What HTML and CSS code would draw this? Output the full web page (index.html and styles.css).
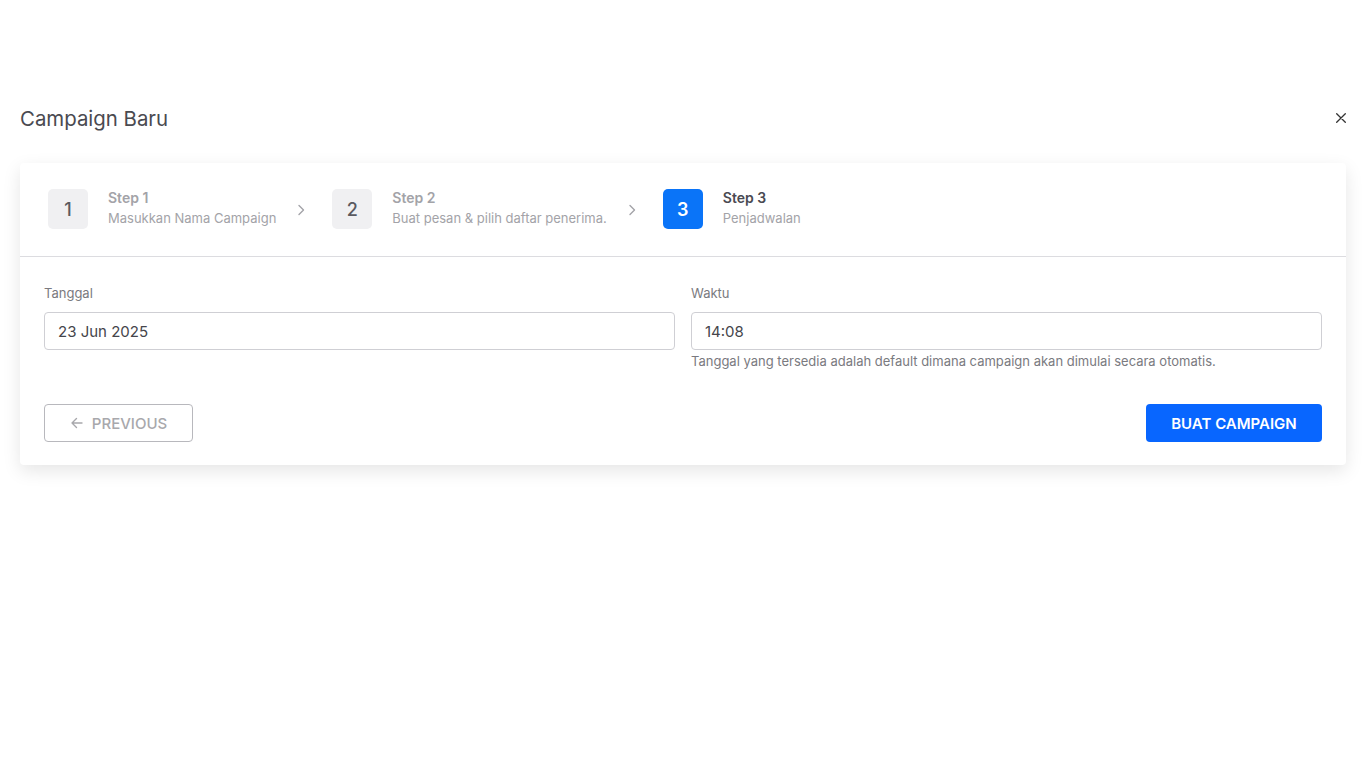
FILE: index.html
```html
<!DOCTYPE html>
<html lang="en">
<head>
    <meta charset="UTF-8">
    <meta name="viewport" content="width=device-width, initial-scale=1.0">
    <title>Campaign Baru</title>
    <link rel="stylesheet" href="styles.css">
</head>
<body>
    <div class="modal">
        <div class="modal-header">
            <h2>Campaign Baru</h2>
            <button class="close-btn" aria-label="Close">
                <svg width="10" height="10" viewBox="0 0 10 10"><path d="M0.7 0.7L9.3 9.3M9.3 0.7L0.7 9.3" stroke="#333" stroke-width="1.3" stroke-linecap="round"/></svg>
            </button>
        </div>

        <div class="card">
            <div class="stepper">
                <div class="step">
                    <div class="step-num">1</div>
                    <div class="step-text">
                        <div class="step-title">Step 1</div>
                        <div class="step-sub">Masukkan Nama Campaign</div>
                    </div>
                </div>
                <svg class="chevron" width="16" height="16" viewBox="0 0 16 16"><path d="M6 3.5L10.5 8L6 12.5" fill="none" stroke="#a3a3a8" stroke-width="1.4" stroke-linecap="round" stroke-linejoin="round"/></svg>
                <div class="step">
                    <div class="step-num">2</div>
                    <div class="step-text">
                        <div class="step-title">Step 2</div>
                        <div class="step-sub">Buat pesan &amp; pilih daftar penerima.</div>
                    </div>
                </div>
                <svg class="chevron" width="16" height="16" viewBox="0 0 16 16"><path d="M6 3.5L10.5 8L6 12.5" fill="none" stroke="#a3a3a8" stroke-width="1.4" stroke-linecap="round" stroke-linejoin="round"/></svg>
                <div class="step active">
                    <div class="step-num">3</div>
                    <div class="step-text">
                        <div class="step-title">Step 3</div>
                        <div class="step-sub">Penjadwalan</div>
                    </div>
                </div>
            </div>

            <div class="form-body">
                <div class="form-row">
                    <div class="field">
                        <label>Tanggal</label>
                        <div class="input">23 Jun 2025</div>
                    </div>
                    <div class="field">
                        <label>Waktu</label>
                        <div class="input">14:08</div>
                        <div class="hint">Tanggal yang tersedia adalah default dimana campaign akan dimulai secara otomatis.</div>
                    </div>
                </div>

                <div class="actions">
                    <button class="btn-prev">
                        <svg width="14" height="14" viewBox="0 0 14 14"><path d="M12 7H2M6.5 2.5L2 7L6.5 11.5" fill="none" stroke="#a8a8ac" stroke-width="1.4" stroke-linecap="round" stroke-linejoin="round"/></svg>
                        PREVIOUS
                    </button>
                    <button class="btn-primary">BUAT CAMPAIGN</button>
                </div>
            </div>
        </div>
    </div>
</body>
</html>
```

FILE: styles.css
```css
body {
    margin: 0;
    padding: 0;
    font-family: Inter, "Noto Sans", sans-serif;
    background: #fff;
    color: #3f3f46;
}

.modal {
    padding: 104px 20px 40px 20px;
}

.modal-header {
    display: flex;
    justify-content: space-between;
    align-items: center;
    height: 28px;
}

.modal-header h2 {
    margin: 0;
    font-size: 20.4px;
    font-weight: 400;
    color: #4a4a50;
}

.close-btn {
    background: none;
    border: none;
    padding: 0;
    cursor: pointer;
    display: flex;
}

.card {
    margin-top: 31px;
    background: #fff;
    border-radius: 4px;
    box-shadow: 0 6px 18px rgba(0, 0, 0, 0.1);
}

.stepper {
    display: flex;
    align-items: center;
    padding: 26px 28px 27px 28px;
    border-bottom: 1px solid #dcdce0;
}

.step {
    display: flex;
    align-items: center;
}

.step-num {
    width: 40px;
    height: 40px;
    border-radius: 5px;
    background: #f0f0f2;
    color: #5a5a60;
    font-size: 18px;
    font-weight: 500;
    display: flex;
    align-items: center;
    justify-content: center;
}

.step-text {
    margin-left: 20px;
    margin-top: -2px;
}

.step-title {
    font-size: 14px;
    font-weight: 600;
    color: #a3a3a8;
    line-height: 18px;
}

.step-sub {
    font-size: 13px;
    color: #a3a3a8;
    line-height: 18px;
    margin-top: 2px;
}

.step.active .step-num {
    background: #0a74f8;
    color: #fff;
    font-weight: 600;
}

.step.active .step-title {
    color: #4a4a52;
}

.chevron {
    margin: 2px 23px 0 17px;
}

.form-body {
    padding: 28px 24px 23px 24px;
}

.form-row {
    display: grid;
    grid-template-columns: 1fr 1fr;
    gap: 16px;
}

.field label {
    display: block;
    font-size: 13px;
    color: #7a7a80;
    line-height: 16px;
    margin-bottom: 11px;
}

.input {
    height: 36px;
    border: 1px solid #cfcfd4;
    border-radius: 4px;
    padding: 0 13px;
    display: flex;
    align-items: center;
    font-size: 15px;
    color: #45454b;
}

.hint {
    font-size: 13px;
    color: #7a7a80;
    margin-top: 3px;
    line-height: 16px;
}

.actions {
    display: flex;
    justify-content: space-between;
    margin-top: 35px;
}

.btn-prev {
    display: flex;
    align-items: center;
    gap: 8px;
    height: 38px;
    width: 149px;
    justify-content: center;
    background: #fff;
    border: 1px solid #b8b8bd;
    border-radius: 4px;
    color: #a8a8ac;
    font-family: inherit;
    font-size: 15px;
    font-weight: 500;
    cursor: pointer;
}

.btn-primary {
    height: 38px;
    width: 176px;
    background: #0866ff;
    color: #fff;
    border: none;
    border-radius: 4px;
    font-family: inherit;
    font-size: 15px;
    font-weight: 600;
    cursor: pointer;
}
```
